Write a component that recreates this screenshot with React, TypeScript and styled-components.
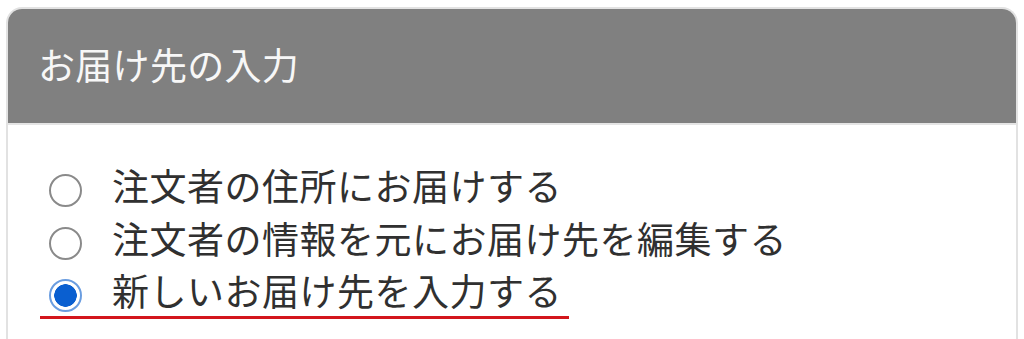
import React, { useState } from 'react';
import styled, { createGlobalStyle } from 'styled-components';

const GlobalStyle = createGlobalStyle`
  html, body {
    margin: 0;
    padding: 0;
    background: #ffffff;
    font-family: "Noto Sans CJK JP", "Noto Sans", sans-serif;
  }
`;

const Card = styled.section`
  margin: 7px 6px 0 6px;
  border: 2px solid #e2e2e2;
  border-bottom: none;
  border-radius: 16px 16px 0 0;
  overflow: hidden;
  background: #ffffff;
  height: 340px;
`;

const Header = styled.h2`
  margin: 0;
  height: 116px;
  display: flex;
  align-items: center;
  padding: 0 0 4px 30px;
  box-sizing: border-box;
  background: #808080;
  color: #f7f7f7;
  font-size: 37px;
  font-weight: 400;
  letter-spacing: 0.3px;
  border-bottom: 2px solid #e4e4e4;
`;

const Options = styled.div`
  display: flex;
  flex-direction: column;
  align-items: flex-start;
  padding: 34px 0 0 32px;
`;

const Option = styled.label<{ $marked?: boolean }>`
  display: inline-flex;
  align-items: center;
  gap: 30px;
  height: ${(p) => (p.$marked ? '51px' : '53px')};
  padding: 0 7px 0 9px;
  border-bottom: ${(p) => (p.$marked ? '3px solid #d3161c' : '3px solid transparent')};
  margin-bottom: ${(p) => (p.$marked ? '0' : '-3px')};
  cursor: pointer;
`;

const Radio = styled.input.attrs({ type: 'radio' })`
  appearance: none;
  margin: 10px 0 0 0;
  width: 33px;
  height: 33px;
  flex: none;
  border-radius: 50%;
  box-sizing: border-box;
  border: 2px solid #8a8a8a;
  background: #ffffff;

  &:checked {
    border: 2px solid #6a9de0;
    background: radial-gradient(circle, #0a5fd0 0 11px, #ffffff 11.5px);
  }
`;

const Label = styled.span`
  font-size: 37px;
  color: #303030;
  line-height: 1;
  letter-spacing: 0.5px;
  white-space: nowrap;
`;

const choices = [
  '注文者の住所にお届けする',
  '注文者の情報を元にお届け先を編集する',
  '新しいお届け先を入力する',
];

export default function App() {
  const [selected, setSelected] = useState(2);
  return (
    <>
      <GlobalStyle />
      <Card>
        <Header>お届け先の入力</Header>
        <Options>
          {choices.map((text, i) => (
            <Option key={text} $marked={i === 2}>
              <Radio
                name="destination"
                checked={selected === i}
                onChange={() => setSelected(i)}
              />
              <Label>{text}</Label>
            </Option>
          ))}
        </Options>
      </Card>
    </>
  );
}
